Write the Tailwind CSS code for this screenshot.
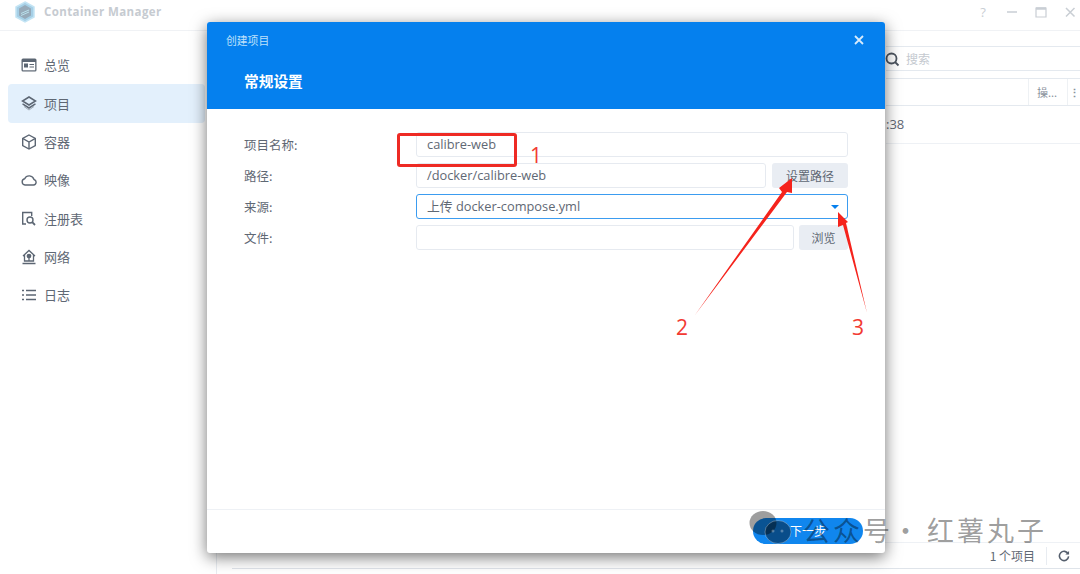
<!DOCTYPE html>
<html lang="zh">
<head>
<meta charset="UTF-8" />
<title>Container Manager</title>
<script src="https://cdn.jsdelivr.net/npm/@tailwindcss/browser@4"></script>
</head>
<body class="relative w-[1080px] h-[574px] overflow-hidden bg-white font-['Noto_Sans_CJK_SC','Noto_Sans',sans-serif] text-[13px] text-[#5f6874]">

  <!-- window -->
  <div class="flex flex-col h-full">
    <header class="flex items-center h-[31px] shrink-0 border-b border-[#f0f2f5] pl-[15px] pr-[4px] pb-[6px]">
      <svg width="20" height="22" viewBox="0 0 20 22" class="opacity-80"><path d="M10 1 19 6v10l-9 5-9-5V6z" fill="#8fc4e0" stroke="#b5def2" stroke-width="1.5"/><path d="M10 4 16 7.500v7L10 18l-6-3.500v-7z" fill="#7d95a8"/><path d="M6 12.500 14 9M6 14.500 14 11" stroke="#a9dcea" stroke-width="1"/></svg>
      <span class="ml-[9px] text-[11.500px] font-bold tracking-[0.4px] text-[#c6cbd1] font-['Open_Sans',sans-serif]">Container Manager</span>
      <div class="ml-auto flex items-center gap-[17px] text-[#c9ced4]">
        <span class="w-[12px] text-center text-[13px] leading-[14px] font-['Open_Sans',sans-serif]">?</span>
        <svg width="12" height="12" viewBox="0 0 12 12"><path d="M1 6h10" stroke="#c9ced4" stroke-width="1.500"/></svg>
        <svg width="12" height="12" viewBox="0 0 12 12"><path d="M1 2h10v9H1z" fill="none" stroke="#c9ced4" stroke-width="1.200"/><path d="M1 2.500h10" stroke="#c9ced4" stroke-width="2.500"/></svg>
        <svg width="12" height="12" viewBox="0 0 12 12"><path d="M2 2l8.500 8.500M10.500 2 2 10.500" stroke="#c9ced4" stroke-width="1.500"/></svg>
      </div>
    </header>

    <div class="flex flex-1 min-h-0">
      <aside class="w-[217px] shrink-0 border-r border-[#e8ecf1] pt-[15px] pl-[8px] pr-[11px]">
        <nav class="flex flex-col">
          <a class="flex items-center h-[38.300px] pl-[13px] gap-[7px] rounded-[4px]">
            <svg width="16" height="14" viewBox="0 0 16 14"><rect x="0.500" y="0.500" width="15" height="13" rx="1.500" fill="#5c6673"/><rect x="1.800" y="4" width="12.400" height="8.300" fill="#fff"/><rect x="3" y="5.500" width="4" height="4" fill="#5c6673"/><path d="M8.500 6.500h4.500M8.500 9h4.500" stroke="#5c6673" stroke-width="1.200"/></svg>
            <span>总览</span>
          </a>
          <a class="flex items-center h-[38.300px] pl-[13px] gap-[7px] rounded-[4px] bg-[#e3f0fc]">
            <svg width="16" height="15" viewBox="0 0 16 15" fill="none" stroke="#5c6673" stroke-width="1.500"><path d="M8 1 14.500 5 8 9 1.500 5z"/><path d="M2 8.200 8 12l6-3.800" stroke-linecap="round"/><path d="M3 10.500 8 14l5-3.500" stroke-width="0.500"/></svg>
            <span>项目</span>
          </a>
          <a class="flex items-center h-[38.300px] pl-[13px] gap-[7px]">
            <svg width="16" height="16" viewBox="0 0 16 16" fill="none" stroke="#5c6673" stroke-width="1.400"><path d="M8 1 14.300 4.500v7L8 15l-6.300-3.500v-7z"/><path d="M2 4.700 8 8l6-3.300M8 8v7"/></svg>
            <span>容器</span>
          </a>
          <a class="flex items-center h-[38.300px] pl-[13px] gap-[7px]">
            <svg width="16" height="12" viewBox="0 0 16 12" fill="none" stroke="#5c6673" stroke-width="1.400"><path d="M4 11h8.500a2.800 2.800 0 0 0 .5-5.500A5 5 0 0 0 3.700 4.700 3.200 3.200 0 0 0 4 11z"/></svg>
            <span>映像</span>
          </a>
          <a class="flex items-center h-[38.300px] pl-[13px] gap-[7px]">
            <svg width="16" height="15" viewBox="0 0 16 15" fill="none" stroke="#5c6673" stroke-width="1.400"><path d="M5 13H1.700V1.500h9V5"/><circle cx="9" cy="9" r="3"/><path d="M11.200 11.200 14 14" stroke-width="1.800"/></svg>
            <span>注册表</span>
          </a>
          <a class="flex items-center h-[38.300px] pl-[13px] gap-[7px]">
            <svg width="16" height="16" viewBox="0 0 16 16" fill="none" stroke="#5c6673" stroke-width="1.300"><path d="M2 7 8 1.500 14 7M3.500 6v6h9V6"/><circle cx="8" cy="7" r="1.700" fill="#5c6673"/><path d="M8 8v4"/><path d="M1.500 14.500h13" stroke-width="1.500"/></svg>
            <span>网络</span>
          </a>
          <a class="flex items-center h-[38.300px] pl-[13px] gap-[7px]">
            <svg width="16" height="12" viewBox="0 0 16 12" fill="none" stroke="#5c6673" stroke-width="1.500"><path d="M5 1.500h10M5 6h10M5 10.500h10M1 1.500h2M1 6h2M1 10.500h2"/></svg>
            <span>日志</span>
          </a>
        </nav>
      </aside>

      <main class="flex flex-col flex-1 min-w-0 text-[12px]">
        <div class="flex justify-end pt-[15px]">
          <div class="flex items-center w-[194px] h-[25px] border-y border-[#e4e9ef] pl-[20px] text-[#c4c9cf]">搜索</div>
        </div>
        <div class="flex justify-end mt-[7px]">
          <div class="flex items-center justify-end w-[194px] h-[28px] border-y border-[#e4e9ef] text-[11px] text-[#8a929c]">
            <span class="flex items-center h-full w-[39px] pl-[8px] border-l border-[#eef1f4]">操...</span>
            <span class="flex items-center justify-center h-full w-[13px] border-l border-[#eef1f4] font-bold">⋮</span>
          </div>
        </div>
        <div class="flex justify-end">
          <div class="flex items-center w-[194px] h-[38px] border-b border-[#eef1f5] text-[13px] font-['Open_Sans',sans-serif]">:38</div>
        </div>
        <div class="mt-auto flex items-center justify-end h-[26px] border-t border-[#eef1f5] pr-[10px] text-[12px]">
          <span>1 个项目</span>
          <span class="w-px h-[18px] bg-[#e8ecf1] mx-[11px]"></span>
          <svg width="12" height="12" viewBox="0 0 13 13" fill="none" stroke="#555f6d" stroke-width="1.700"><path d="M11 4.200A5 5 0 1 0 11.500 7"/><path d="M12 1v4H8z" fill="#555f6d" stroke="none"/></svg>
        </div>
        <div class="h-px ml-[15px] bg-[#dfe4ea] mb-[5px]"></div>
      </main>
    </div>
  </div>

  <!-- search icon peeks out from under the dialog -->
  <svg class="absolute left-[885px] top-[52px]" width="16" height="15" viewBox="0 0 16 15" fill="none" stroke="#4d5560" stroke-width="1.800"><circle cx="6.500" cy="6.500" r="5"/><path d="M10 10l3.500 3.500"/></svg>

  <!-- dialog -->
  <section class="absolute left-[207px] top-[22px] w-[678px] h-[531px] flex flex-col bg-white rounded-[3px] shadow-[0_4px_16px_rgba(0,0,0,0.55)] overflow-hidden">
    <div class="h-[87px] shrink-0 bg-[#0580ee] text-white pl-[19px] pr-[21px]">
      <div class="flex items-center justify-between h-[36px]">
        <span class="text-[10.800px] text-[#bfe0fb]">创建项目</span>
        <svg width="10" height="10" viewBox="0 0 10 10" fill="none" stroke="#d8ebfc" stroke-width="1.800"><path d="M1 1l8 8M9 1 1 9"/></svg>
      </div>
      <h2 class="mt-[13px] ml-[18px] text-[14.700px] font-bold leading-[20px]">常规设置</h2>
    </div>

    <div class="flex-1 pt-[23px] pl-[37px] pr-[37px] flex flex-col gap-[6px] text-[12.500px]">
      <div class="flex items-center h-[25px]">
        <label class="w-[172px] shrink-0 pt-[2px]">项目名称:</label>
        <div class="flex-1 flex items-center h-full px-[10px] pt-[1px] border border-[#e6eaf0] rounded-[3px] font-['Open_Sans',sans-serif] text-[12.800px]">calibre-web</div>
      </div>
      <div class="flex items-center h-[25px]">
        <label class="w-[172px] shrink-0 pt-[2px]">路径:</label>
        <div class="flex-1 flex items-center h-full px-[10px] pt-[1px] border border-[#e6eaf0] rounded-[3px] font-['Open_Sans',sans-serif] text-[12.800px]">/docker/calibre-web</div>
        <button class="ml-[6px] w-[76px] h-full bg-[#e9edf3] rounded-[3px] text-[12px]">设置路径</button>
      </div>
      <div class="flex items-center h-[25px]">
        <label class="w-[172px] shrink-0 pt-[2px]">来源:</label>
        <div class="flex-1 flex items-center justify-between h-full pl-[10px] pr-[8px] pt-[1px] border border-[#3b9cf0] rounded-[3px] font-['Open_Sans','Noto_Sans_CJK_SC',sans-serif] text-[12.800px]">
          <span>上传 docker-compose.yml</span>
          <span class="w-0 h-0 border-x-[4px] border-x-transparent border-t-[4px] border-t-[#0580ee]"></span>
        </div>
      </div>
      <div class="flex items-center h-[25px]">
        <label class="w-[172px] shrink-0 pt-[2px]">文件:</label>
        <div class="flex-1 h-full border border-[#e6eaf0] rounded-[3px]"></div>
        <button class="ml-[5px] w-[49px] h-full bg-[#e9edf3] rounded-[3px] text-[12px]">浏览</button>
      </div>
    </div>

    <div class="h-[44px] shrink-0 border-t border-[#eef1f5] flex items-center justify-end pr-[22px] pb-[2px]">
      <button class="w-[110px] h-[26px] rounded-full bg-[#1086ee] text-white text-[12px]">下一步</button>
    </div>
  </section>

  <!-- red annotations -->
  <div class="absolute left-[397px] top-[133px] w-[120px] h-[34px] border-[3px] border-[#ee2a24] rounded-[3px]"></div>
  <span class="absolute left-[530px] top-[143px] text-[21px] leading-[24px] text-[#f23a32] font-['Open_Sans',sans-serif]">1</span>
  <span class="absolute left-[676px] top-[315px] text-[21px] leading-[24px] text-[#f23a32] font-['Open_Sans',sans-serif]">2</span>
  <span class="absolute left-[852px] top-[315px] text-[21px] leading-[24px] text-[#f23a32] font-['Open_Sans',sans-serif]">3</span>
  <svg class="absolute left-0 top-0" width="1080" height="574" viewBox="0 0 1080 574" fill="#f5231c">
    <path d="M695 315 782 192 779 188 792 178 792 193 787 192z"/>
    <path d="M867 313 843 225 838 227 838 212 848 222 846 223z"/>
  </svg>

  <!-- watermark -->
  <svg class="absolute left-[748px] top-[509px]" width="46" height="40" viewBox="0 0 46 40">
    <ellipse cx="15" cy="14" rx="13.500" ry="12" fill="#000" fill-opacity="0.38"/>
    <ellipse cx="30" cy="23" rx="13" ry="11.500" fill="#000" fill-opacity="0.42" stroke="#fff" stroke-opacity="0.3"/>
    <circle cx="25" cy="22" r="1.500" fill="#fff" fill-opacity="0.3"/><circle cx="34" cy="22" r="1.500" fill="#fff" fill-opacity="0.3"/>
  </svg>
  <div class="absolute left-[803px] top-[512px] flex text-[27px] leading-[36px] tracking-[3px] whitespace-nowrap text-black/40">
    <span>公众号</span>
    <span class="ml-[-1px]">·</span>
    <span class="ml-[5px]">红薯丸子</span>
  </div>
</body>
</html>
